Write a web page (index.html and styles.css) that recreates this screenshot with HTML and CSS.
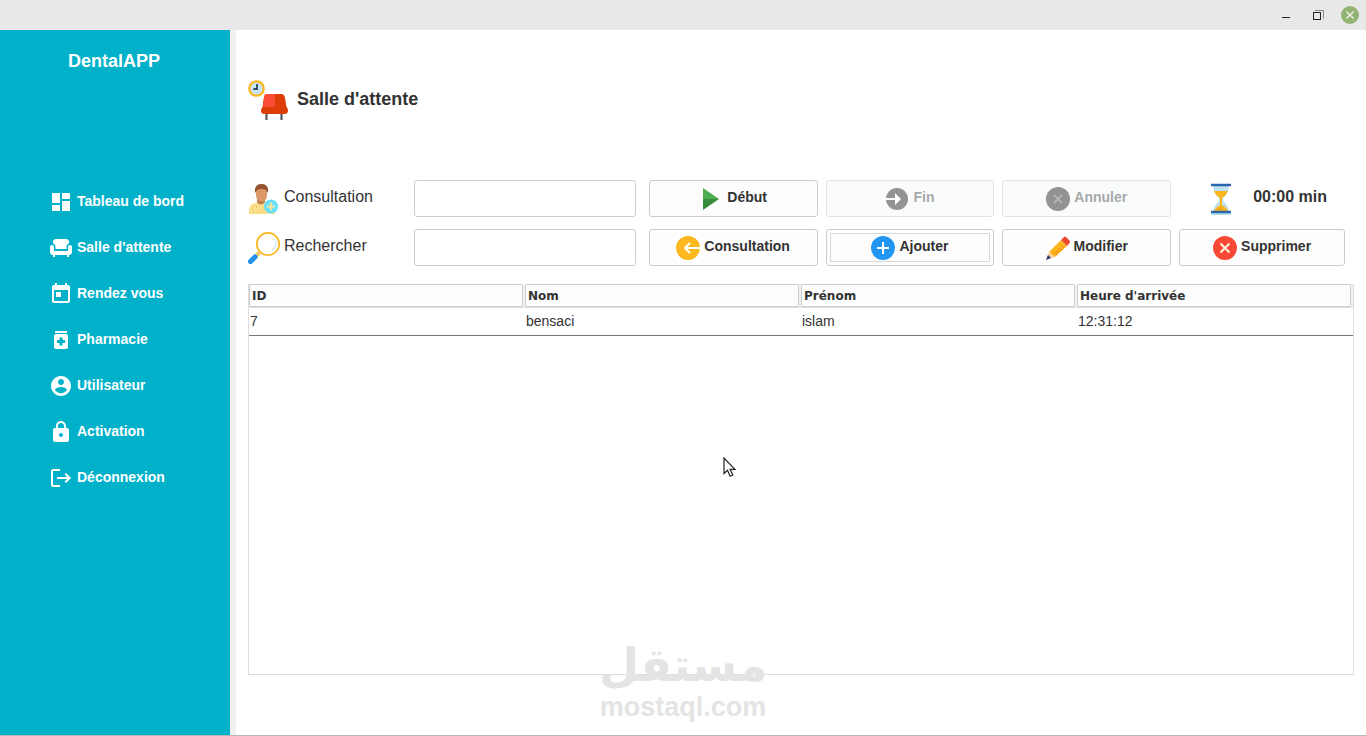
FILE: index.html
```html
<!DOCTYPE html>
<html lang="fr">
<head>
<meta charset="utf-8">
<meta name="viewport" content="width=device-width, initial-scale=1">
<title>DentalAPP</title>
<link rel="stylesheet" href="styles.css">
</head>
<body>
<div class="window">
  <header class="titlebar">
    <button class="win-btn" type="button" aria-label="Réduire"><svg width="18" height="18" viewBox="0 0 18 18"><path d="M5 11.500h8" stroke="#222" fill="none"/></svg></button>
    <button class="win-btn" type="button" aria-label="Restaurer"><svg width="18" height="18" viewBox="0 0 18 18"><path d="M6 4.500h8.500v8" stroke="#888" fill="none"/><rect x="4.500" y="6.500" width="7" height="7" stroke="#222" fill="none"/></svg></button>
    <button class="win-btn" type="button" aria-label="Fermer"><svg width="18" height="18" viewBox="0 0 18 18"><circle cx="9" cy="9" r="9" fill="#92b372"/><path d="M5.500 5.500l7 7m0-7l-7 7" stroke="#f4f4f4" stroke-width="1.300"/></svg></button>
  </header>

  <div class="body">
    <aside class="sidebar">
      <div class="brand">DentalAPP</div>
      <nav class="nav">
        <a class="nav-link" href="#"><svg class="nav-icon" viewBox="0 0 24 24"><path d="M3 13h8V3H3v10zm0 8h8v-6H3v6zm10 0h8V11h-8v10zm0-18v6h8V3h-8z"/></svg><span>Tableau de bord</span></a>
        <a class="nav-link" href="#"><svg class="nav-icon" viewBox="0 0 24 24"><path d="M21 9c-1.100 0-2 .9-2 2v4H5v-4c0-1.100-.9-2-2-2s-2 .9-2 2v5c0 1.700 1.300 3 3 3v2h2v-2h12v2h2v-2c1.700 0 3-1.300 3-3v-5c0-1.100-.9-2-2-2z"/><path d="M7 3h10c1.700 0 3 1.300 3 3v1.500c-1.500.4-2.500 1.700-2.500 3.300V13h-11v-2.200C6.500 9.200 5.500 7.900 4 7.500V6c0-1.700 1.300-3 3-3z"/></svg><span>Salle d'attente</span></a>
        <a class="nav-link" href="#"><svg class="nav-icon" viewBox="0 0 24 24"><path d="M19 3h-1V1h-2v2H8V1H6v2H5c-1.110 0-2 .9-2 2v14c0 1.100.89 2 2 2h14c1.100 0 2-.9 2-2V5c0-1.100-.9-2-2-2zm0 16H5V8h14v11zM7 10h5v5H7z"/></svg><span>Rendez vous</span></a>
        <a class="nav-link" href="#"><svg class="nav-icon" viewBox="0 0 24 24"><path d="M6 3h12v2H6zM17 6H7c-1.100 0-2 .9-2 2v11c0 1.100.9 2 2 2h10c1.100 0 2-.9 2-2V8c0-1.100-.9-2-2-2zm-1 9h-2.500v2.500h-3V15H8v-3h2.500V9.500h3V12H16v3z"/></svg><span>Pharmacie</span></a>
        <a class="nav-link" href="#"><svg class="nav-icon" viewBox="0 0 24 24"><path d="M12 2C6.480 2 2 6.480 2 12s4.480 10 10 10 10-4.480 10-10S17.520 2 12 2zm0 3c1.660 0 3 1.340 3 3s-1.340 3-3 3-3-1.340-3-3 1.340-3 3-3zm0 14.200c-2.500 0-4.710-1.280-6-3.220.03-1.990 4-3.080 6-3.080 1.990 0 5.970 1.090 6 3.080-1.290 1.940-3.500 3.220-6 3.220z"/></svg><span>Utilisateur</span></a>
        <a class="nav-link" href="#"><svg class="nav-icon" viewBox="0 0 24 24"><path d="M18 8h-1V6c0-2.760-2.240-5-5-5S7 3.240 7 6v2H6c-1.100 0-2 .9-2 2v10c0 1.100.9 2 2 2h12c1.100 0 2-.9 2-2V10c0-1.100-.9-2-2-2zm-6 9c-1.100 0-2-.9-2-2s.9-2 2-2 2 .9 2 2-.9 2-2 2zm3.100-9H8.900V6c0-1.710 1.390-3.100 3.100-3.100 1.710 0 3.100 1.390 3.100 3.100v2z"/></svg><span>Activation</span></a>
        <a class="nav-link" href="#"><svg class="nav-icon" viewBox="0 0 24 24"><path d="M11 3H4a2 2 0 0 0-2 2v14c0 1.100.9 2 2 2h7v-2H4V5h7V3zM8 11h10.200l-2.600-2.600L17 7l5 5-5 5-1.400-1.400 2.600-2.600H8z"/></svg><span>Déconnexion</span></a>
      </nav>
    </aside>

    <main class="main">
      <h1 class="title">
        <svg width="42" height="42" viewBox="0 0 42 42">
          <circle cx="8.500" cy="8.500" r="7.200" fill="#c5e3fa" stroke="#fbb820" stroke-width="2.300"/>
          <path d="M9 4v5H5.500" stroke="#2f4859" stroke-width="1.800" fill="none"/>
          <path d="M18.500 33v7M33.500 33v7" stroke="#585b63" stroke-width="2.200"/>
          <path d="M19 14h14q3.500 0 4 4l2 12H14l2-13q.5-3 3-3z" fill="#dd3e08"/>
          <path d="M19 14h8v13H15l1-10q.4-3 3-3z" fill="#fb4b37"/>
          <rect x="13" y="27" width="27" height="7" rx="3.500" fill="#dd3e08"/>
        </svg>
        <span>Salle d'attente</span>
      </h1>

      <form class="controls">
        <label class="field-label" for="consultation">
          <svg width="32" height="32" viewBox="0 0 32 32">
            <path d="M1 31v-4q0-6 7-7l4-2h4l5 2q6 1 6 6v5z" fill="#fbdf8b"/>
            <path d="M9 15h8v4q-4 5-8 0z" fill="#bf7a50"/>
            <path d="M8 6h11v6q0 6-5.500 6.500Q8 18 8 12z" fill="#db9868"/>
            <path d="M7 10V6q1-5 6.500-5T20 6v4l-2-3q-5-2-9 0z" fill="#94552e"/>
            <path d="M4 25h1m3-1h1m3 3h1m-8 2h1m3 0h1m5-4h1m-2 4h1" stroke="#e3a650"/>
            <circle cx="23" cy="23.500" r="7" fill="#67e1fb"/>
            <path d="M23 19.500v8M19 23.500h8" stroke="#f6e3a0" stroke-width="2.200"/>
          </svg>
          <span>Consultation</span>
        </label>
        <input class="field" id="consultation" type="text">
        <button class="btn" type="button"><svg width="24" height="24" viewBox="0 0 24 24"><path d="M4 1l16 11H4z" fill="#4cae50"/><path d="M4 12h16L4 23z" fill="#378d3b"/></svg><span>Début</span></button>
        <button class="btn" type="button" disabled><svg width="24" height="24" viewBox="0 0 24 24"><circle cx="12" cy="12" r="11" fill="#939393"/><path d="M1 11h9V6l6 6-6 6v-5H1z" fill="#fff"/></svg><span>Fin</span></button>
        <button class="btn" type="button" disabled><svg width="24" height="24" viewBox="0 0 24 24"><circle cx="12" cy="12" r="12" fill="#939393"/><path d="M8 8l8 8m0-8l-8 8" stroke="#bcbcbc" stroke-width="1.600"/></svg><span>Annuler</span></button>
        <div class="timer">
          <svg width="32" height="32" viewBox="0 0 32 32">
            <path d="M8 3h16q-1 8-6 12v3q5 4 6 11H8q1-7 6-11v-3Q9 11 8 3z" fill="#bfe0f2"/>
            <path d="M9 8h14q-2 5-6 7v7q4 2 6 6H9q2-4 6-6v-7q-4-2-6-7z" fill="#fdb51c"/>
            <path d="M6 2h20M6 29h20" stroke="#2964ad" stroke-width="2.500"/>
            <path d="M6 31h20" stroke="#65b9cc"/>
            <path d="M15 26h1" stroke="#d34a20"/>
          </svg>
          <output>00:00 min</output>
        </div>

        <label class="field-label" for="recherche">
          <svg width="32" height="32" viewBox="0 0 32 32">
            <circle cx="20" cy="12" r="11.200" fill="#fff" stroke="#feb928" stroke-width="1.800"/>
            <path d="M27 6q3 7-3 13" stroke="#dff1fa" stroke-width="2" fill="none"/>
            <path d="M11.500 20.500L7.500 24.500" stroke="#f5c66b" stroke-width="4"/>
            <path d="M7 25L2.500 29.500" stroke="#2291ee" stroke-width="5" stroke-linecap="round"/>
          </svg>
          <span>Rechercher</span>
        </label>
        <input class="field" id="recherche" type="text">
        <button class="btn" type="button"><svg width="24" height="24" viewBox="0 0 24 24"><circle cx="12" cy="12" r="12" fill="#fdb91f"/><path d="M24 12H10m4-5l-5 5 5 5" fill="none" stroke="#fff" stroke-width="2.200"/></svg><span>Consultation</span></button>
        <button class="btn btn-focus" type="button"><svg width="24" height="24" viewBox="0 0 24 24"><circle cx="12" cy="12" r="12" fill="#2196f3"/><path d="M12 6v12M6 12h12" stroke="#fff" stroke-width="2"/></svg><span>Ajouter</span></button>
        <button class="btn" type="button"><svg width="24" height="24" viewBox="0 0 24 24"><path d="M0 24l3-8 6 5z" fill="#f9cfa0"/><path d="M0 24l2-5 3 3z" fill="#293e75"/><path d="M3 16L15 4l6 6L9 21z" fill="#fdb51c"/><path d="M15 4l3-3q1-1 2 0l4 4q.5 1-.5 2L21 10z" fill="#f04b32"/><path d="M8 18l9-9M10 19l9-9" stroke="#e95524" stroke-width="1" stroke-dasharray="1 1.500"/></svg><span>Modifier</span></button>
        <button class="btn" type="button"><svg width="24" height="24" viewBox="0 0 24 24"><circle cx="12" cy="12" r="12" fill="#f84936"/><path d="M7.500 7.500l9 9m0-9l-9 9" stroke="#fff4dd" stroke-width="2"/></svg><span>Supprimer</span></button>
      </form>

      <div class="table-wrap">
        <table class="table">
          <thead>
            <tr><th scope="col"><div>ID</div></th><th scope="col"><div>Nom</div></th><th scope="col"><div>Prénom</div></th><th scope="col"><div>Heure d'arrivée</div></th></tr>
          </thead>
          <tbody>
            <tr><td>7</td><td>bensaci</td><td>islam</td><td>12:31:12</td></tr>
          </tbody>
        </table>
      </div>
    </main>
  </div>

  <div class="watermark"><span class="mark-ar" lang="ar" dir="rtl">مستقل</span><span class="mark-en">mostaql.com</span></div>
  <svg class="cursor" width="14" height="21" viewBox="0 0 14 21"><path d="M1 1v15.500l3.500-3.300 2.700 6 2.600-1.200-2.700-5.700H12z" fill="#fff" stroke="#222" stroke-width="1.200"/></svg>
</div>
</body>
</html>
```
FILE: styles.css
```css
* { box-sizing: border-box; }

body {
  margin: 0;
  font-family: "Liberation Sans", Arial, sans-serif;
  color: #333;
  background: #fff;
}

svg { display: block; flex: none; }

.window {
  position: relative;
  display: flex;
  flex-direction: column;
  min-height: 100vh;
  border-bottom: 1px solid #b8b8b8;
}

.titlebar {
  display: flex;
  justify-content: flex-end;
  align-items: center;
  gap: 14px;
  height: 30px;
  padding-right: 7px;
  background: #e8e8e8;
}

.win-btn {
  padding: 0;
  border: 0;
  background: none;
}

.body { display: flex; flex: 1; }

.sidebar {
  width: 230px;
  flex: none;
  background: #00b1c9;
  color: #fff;
}

.brand {
  height: 149px;
  padding: 20px 2px 0 0;
  font-size: 18px;
  line-height: 22px;
  font-weight: bold;
  text-align: center;
}

.nav { display: flex; flex-direction: column; }

.nav-link {
  display: flex;
  align-items: center;
  gap: 4px;
  height: 46px;
  padding-left: 49px;
  color: #fff;
  font-size: 14px;
  font-weight: bold;
  text-decoration: none;
}

.nav-link span { padding-bottom: 2px; }

.nav-icon { width: 24px; height: 24px; fill: #fff; }

.main {
  display: flex;
  flex-direction: column;
  flex: 1;
  min-width: 0;
  padding: 50px 12px 60px;
  border-left: 6px solid #f2f0f2;
}

.title {
  display: flex;
  align-items: center;
  gap: 7px;
  margin: 0 0 58px;
  font-size: 18px;
  line-height: 22px;
}

.title span { padding-bottom: 4px; }

.controls {
  display: grid;
  grid-template-columns: 158px 227fr 169fr 169fr 169fr 166fr;
  gap: 12px 8px;
  margin: 0 9px 18px 0;
}

.field-label {
  display: flex;
  align-items: center;
  gap: 4px;
  font-size: 16px;
}

.field-label span,
.timer output,
.btn span { padding-bottom: 4px; }

.field {
  min-width: 0;
  height: 37px;
  margin-right: 5px;
  padding: 0 8px;
  border: 1px solid #ccc;
  border-radius: 3px;
  background: #fff;
  font: inherit;
}

.btn {
  display: flex;
  align-items: center;
  justify-content: center;
  gap: 4px;
  height: 37px;
  min-width: 0;
  padding: 0;
  border: 1px solid #ccc;
  border-radius: 3px;
  background: #fdfdfd;
  color: #333;
  font-family: inherit;
  font-size: 14px;
  font-weight: bold;
}

.btn:disabled {
  border-color: #e1e3e3;
  background: #fafcfc;
  color: #a5a9a9;
}

.btn-focus {
  outline: 1px solid #d8d8d8;
  outline-offset: -5px;
}

.timer {
  display: flex;
  align-items: center;
  gap: 16px;
  padding-left: 26px;
  font-size: 16px;
  font-weight: bold;
  white-space: nowrap;
}

.table-wrap {
  flex: 1;
  border: 1px solid #ddd;
  border-top: 0;
}

.table {
  width: 100%;
  table-layout: fixed;
  border-collapse: collapse;
}

.table th {
  padding: 0 2px 0 0;
  border-bottom: 1px solid #ddd;
  background: #f2f2f2;
  text-align: left;
}

.table th div {
  height: 23px;
  padding-left: 2px;
  border: 1px solid #ccc;
  border-radius: 2px;
  background: #fdfdfd;
  font-family: "DejaVu Sans", sans-serif;
  font-size: 12px;
  line-height: 22px;
}

.table td {
  height: 28px;
  padding: 0 1px 2px;
  border-bottom: 1px solid #777;
  font-size: 14px;
}

.watermark {
  position: absolute;
  left: 50%;
  bottom: 13px;
  display: flex;
  flex-direction: column;
  align-items: center;
  width: 168px;
  margin-left: -84px;
  color: #e4e4e4;
  font-weight: bold;
  white-space: nowrap;
  pointer-events: none;
}

.mark-ar {
  font-family: "DejaVu Sans", sans-serif;
  font-size: 46px;
  line-height: 54px;
}

.mark-en { font-size: 27px; line-height: 30px; }

.cursor { position: absolute; left: 723px; top: 457px; }
```
